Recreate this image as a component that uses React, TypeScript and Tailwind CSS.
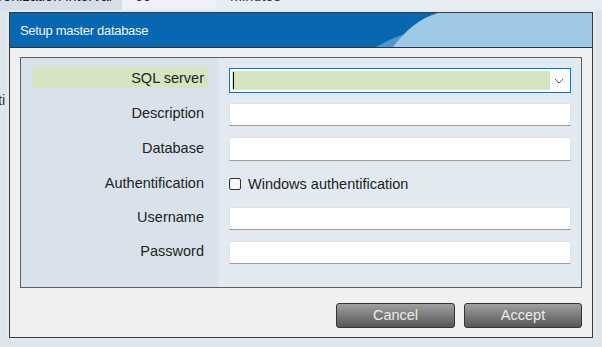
import React from "react";

function TextInput({ h, mt }: { h: string; mt: string }) {
  return (
    <div
      className={`${h} ${mt} w-full bg-white border border-[#dde2e8] border-b-[#9c9c9c]`}
    />
  );
}

export default function App() {
  return (
    <div className="relative h-[347px] w-[602px] overflow-hidden bg-[#dde5ed] font-['Liberation_Sans',Arial,sans-serif] text-[14.5px] text-[#222]">
      {/* background page */}
      <div className="flex h-[10px] overflow-hidden">
        <div className="flex w-[122px] shrink-0 justify-end overflow-hidden bg-[#d6dfe9] pr-[10px]">
          <div className="-mt-[12px] shrink-0 whitespace-nowrap leading-[16px] text-[#1e1e1e]">
            Synchronization interval
          </div>
        </div>
        <div className="w-[94px] shrink-0 bg-[#eef1f5] pl-[13px]">
          <div className="-mt-[12px] leading-[16px] text-[#333]">60</div>
        </div>
        <div className="flex-1 bg-[#e8edf3] pl-[14px]">
          <div className="-mt-[12px] leading-[16px] text-[#333]">Minutes</div>
        </div>
      </div>
      <div className="mt-[82px] -ml-[2px] leading-[16px] text-[#333]">ti</div>

      {/* dialog */}
      <div className="absolute left-[7px] top-[10px] h-[331px] w-[589px] border-b-[3px] border-l-2 border-r-[3px] border-t-2 border-[#e8e8e8]">
        <div className="flex h-full flex-col border border-[#3c3c3c]">
          {/* title bar */}
          <div className="relative flex h-[35px] shrink-0 items-center overflow-hidden border-b border-[#23384d] bg-[#0767b1] pl-[10px]">
            <svg
              className="absolute left-0 top-0"
              width="582"
              height="34"
              viewBox="0 0 582 34"
            >
              <path d="M366 34 C378 27 392 21 412 16 L400 34 Z" fill="#4f97cc" />
              <path
                d="M383 34 C396 17 410 5 428 0 L582 0 L582 34 Z"
                fill="#9ecae6"
              />
            </svg>
            <span className="relative text-[13px] leading-none tracking-[-0.3px] text-[#f2f6fa]">
              Setup master database
            </span>
          </div>

          {/* body */}
          <div className="flex flex-1 flex-col bg-[#f0f0f0] px-[10px] pt-[9px]">
            <div className="flex h-[231px] border border-[#5f5f5f]">
              {/* labels */}
              <div className="flex w-[197px] shrink-0 flex-col bg-[#d9e2eb] pt-[9px]">
                <div className="ml-[11px] mr-[10px] h-[21px] bg-[#d6e5c1] pr-[4px] text-right leading-[23px]">
                  SQL server
                </div>
                <div className="mr-[14px] mt-[14px] h-[21px] text-right leading-[23px]">
                  Description
                </div>
                <div className="mr-[14px] mt-[14px] h-[21px] text-right leading-[23px]">
                  Database
                </div>
                <div className="mr-[14px] mt-[14px] h-[21px] text-right leading-[23px]">
                  Authentification
                </div>
                <div className="mr-[14px] mt-[13px] h-[21px] text-right leading-[23px]">
                  Username
                </div>
                <div className="mr-[14px] mt-[13px] h-[21px] text-right leading-[23px]">
                  Password
                </div>
              </div>

              {/* fields */}
              <div className="flex flex-1 flex-col bg-[#e3e9f0] pl-[11px] pr-[10px] pt-[10px]">
                <div className="flex h-[25px] w-full border border-[#0078d7] bg-white p-[2px]">
                  <div className="flex flex-1 items-center bg-[#d6e5c1]">
                    <div className="ml-[1px] h-[17px] w-[1px] bg-black" />
                  </div>
                  <div className="flex w-[18px] items-center justify-center">
                    <svg width="10" height="6" viewBox="0 0 10 6">
                      <path
                        d="M1 1 L5 5 L9 1"
                        fill="none"
                        stroke="#606060"
                        strokeWidth="1"
                      />
                    </svg>
                  </div>
                </div>
                <TextInput h="h-[23px]" mt="mt-[10px]" />
                <TextInput h="h-[24px]" mt="mt-[11px]" />
                <div className="mt-[11px] flex h-[24px] items-center">
                  <div className="h-[12px] w-[12px] rounded-[2px] border border-[#333] bg-[#f7f7f7]" />
                  <span className="ml-[7px] pt-[1px] text-[#1e1e1e]">
                    Windows authentification
                  </span>
                </div>
                <TextInput h="h-[23px]" mt="mt-[11px]" />
                <TextInput h="h-[23px]" mt="mt-[11px]" />
              </div>
            </div>

            {/* buttons */}
            <div className="mt-[15px] flex justify-end gap-[9px]">
              <button className="flex h-[25px] w-[119px] items-center justify-center rounded-[3px] border border-[#333] bg-gradient-to-b from-[#a0a0a0] to-[#585858] text-[14.5px] text-[#ececec]">
                Cancel
              </button>
              <button className="flex h-[25px] w-[118px] items-center justify-center rounded-[3px] border border-[#333] bg-gradient-to-b from-[#a0a0a0] to-[#585858] text-[14.5px] text-[#ececec]">
                Accept
              </button>
            </div>
          </div>
        </div>
      </div>
    </div>
  );
}
